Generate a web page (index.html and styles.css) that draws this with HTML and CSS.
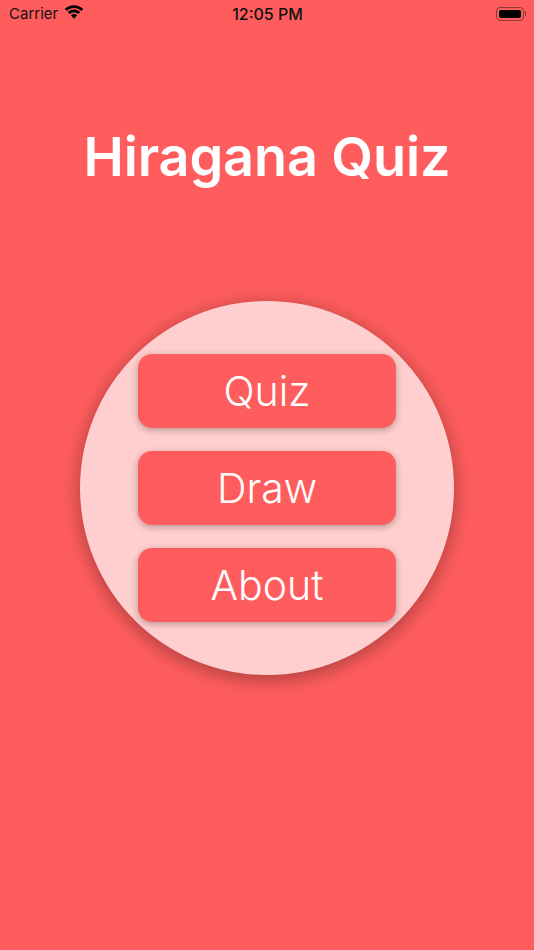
FILE: index.html
```html
<!DOCTYPE html>
<html lang="en">
<head>
    <meta charset="UTF-8">
    <meta name="viewport" content="width=device-width, initial-scale=1.0">
    <title>Hiragana Quiz</title>
    <link rel="stylesheet" href="styles.css">
</head>
<body>
    <div class="status-bar">
        <div class="status-left">
            <span>Carrier</span>
            <svg class="wifi" width="20" height="15" viewBox="0 0 19 14">
                <path d="M9.500 2.800c2.600 0 5 1 6.900 2.700l1.900-2C15.900 1.300 12.800 0 9.500 0S3.100 1.300.7 3.500l1.900 2c1.900-1.700 4.300-2.700 6.900-2.700z"/>
                <path d="M9.500 7c1.500 0 2.900.5 4 1.500l1.900-2c-1.600-1.400-3.700-2.300-5.900-2.300s-4.300.9-5.900 2.300l1.900 2c1.100-1 2.500-1.500 4-1.500z"/>
                <path d="M9.500 8.500c-1.100 0-2.100.4-2.900 1.100l2.900 3.400 2.900-3.400c-.8-.7-1.800-1.100-2.900-1.100z"/>
            </svg>
        </div>
        <div class="status-time">12:05 PM</div>
        <div class="status-right">
            <div class="battery">
                <div class="battery-fill"></div>
            </div>
            <div class="battery-cap"></div>
        </div>
    </div>

    <h1 class="title">Hiragana Quiz</h1>

    <div class="menu-circle">
        <button class="menu-button">Quiz</button>
        <button class="menu-button">Draw</button>
        <button class="menu-button">About</button>
    </div>
</body>
</html>
```

FILE: styles.css
```css
body {
    margin: 0;
    width: 534px;
    height: 950px;
    overflow: hidden;
    background-color: #ff5d5d;
    font-family: Inter, "Liberation Sans", sans-serif;
}
.status-bar {
    display: grid;
    grid-template-columns: 1fr auto 1fr;
    align-items: center;
    height: 27px;
    padding: 0 8px 0 9px;
    color: #111;
    font-size: 15px;
}
.status-left {
    display: flex;
    align-items: center;
    gap: 6px;
}
.wifi {
    margin-top: -2px;
}
.status-time {
    font-size: 16px;
    font-weight: 500;
}
.status-right {
    display: flex;
    align-items: center;
    justify-content: flex-end;
}
.battery {
    box-sizing: border-box;
    width: 28px;
    height: 14px;
    padding: 2px;
    border: 1px solid #8c3a3a;
    border-radius: 4px;
}
.battery-fill {
    height: 100%;
    background-color: #000;
    border-radius: 2px;
}
.battery-cap {
    width: 1px;
    height: 5px;
    margin-left: 1px;
    background-color: #8c3a3a;
}
.title {
    margin: 99px 0 0;
    height: 62px;
    line-height: 62px;
    text-align: center;
    color: #fff;
    font-size: 54px;
    font-weight: 560;
    letter-spacing: -0.1px;
}
.menu-circle {
    box-sizing: border-box;
    display: flex;
    flex-direction: column;
    align-items: center;
    justify-content: center;
    gap: 23px;
    width: 374px;
    height: 374px;
    margin: 113px 0 0 80px;
    background-color: #ffcece;
    border-radius: 50%;
    box-shadow: 0 4px 20px rgba(0, 0, 0, 0.35);
}
.menu-button {
    width: 258px;
    height: 74px;
    padding: 0;
    border: none;
    border-radius: 14px;
    background-color: #ff5d5d;
    color: #fff;
    font-family: inherit;
    font-size: 41px;
    font-weight: 320;
    box-shadow: 0 2px 7px rgba(0, 0, 0, 0.28);
}
```
